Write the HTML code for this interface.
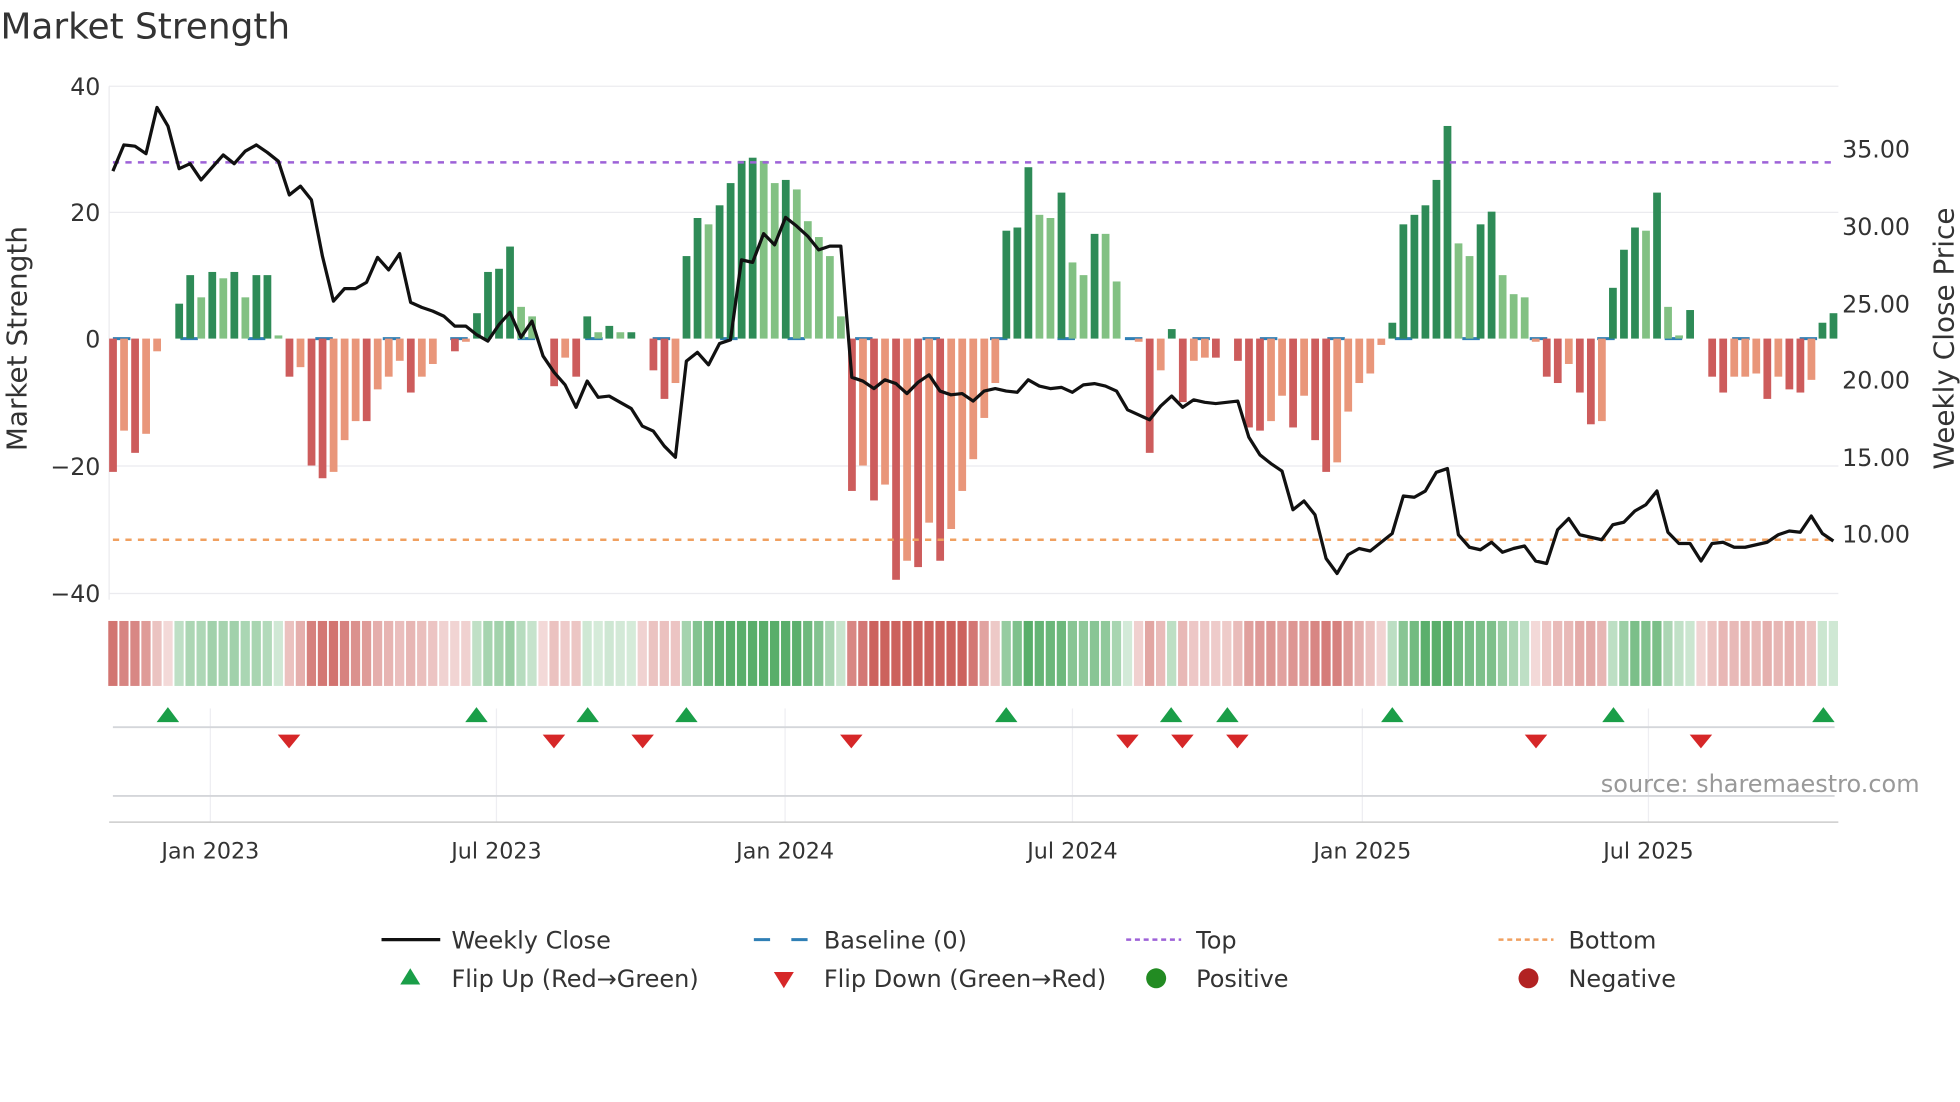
<!DOCTYPE html>
<html><head><meta charset="utf-8">
<style>
html,body{margin:0;padding:0;background:#fff;}
svg{display:block;}
text{font-family:"DejaVu Sans","Liberation Sans",sans-serif;fill:#333;}
</style></head>
<body>
<svg id="c" width="1960" height="1102" viewBox="0 0 1568 882" xmlns="http://www.w3.org/2000/svg">
<rect width="1568" height="882" fill="#fff"/>
<text x="0" y="31" font-size="28.7" fill="#333">Market Strength</text>
<g stroke="#ebebef" stroke-width="1">
<line x1="87" y1="69" x2="1471" y2="69"/>
<line x1="87" y1="170" x2="1471" y2="170"/>
<line x1="87" y1="373" x2="1471" y2="373"/>
<line x1="87" y1="475" x2="1471" y2="475"/>
<line x1="87" y1="69" x2="87" y2="480"/>
</g>
<g font-size="19" text-anchor="end">
<text x="80" y="76">40</text>
<text x="80" y="177">20</text>
<text x="80" y="278">0</text>
<text x="80" y="380">−20</text>
<text x="80" y="482">−40</text>
</g>
<g font-size="19">
<text x="1474" y="126">35.00</text>
<text x="1474" y="188">30.00</text>
<text x="1474" y="250">25.00</text>
<text x="1474" y="311">20.00</text>
<text x="1474" y="373">15.00</text>
<text x="1474" y="434">10.00</text>
</g>
<text transform="translate(21,271) rotate(-90)" font-size="22.3" text-anchor="middle">Market Strength</text>
<text transform="translate(1563,271) rotate(-90)" font-size="22.3" text-anchor="middle">Weekly Close Price</text>
<g id="base"></g>
<g id="bars"></g>
<line x1="90" y1="130" x2="1470" y2="130" stroke="#9d62d8" stroke-width="2" stroke-dasharray="5,5"/>
<line x1="90" y1="432" x2="1470" y2="432" stroke="#f0a060" stroke-width="2" stroke-dasharray="5,5"/>
<polyline id="price" fill="none" stroke="#111" stroke-width="2.6" stroke-linejoin="round"/>
<g id="strip"></g>
<g stroke="#eeeef2" stroke-width="1">
<line x1="168" y1="567" x2="168" y2="658"/><line x1="397" y1="567" x2="397" y2="658"/>
<line x1="628" y1="567" x2="628" y2="658"/><line x1="858" y1="567" x2="858" y2="658"/>
<line x1="1090" y1="567" x2="1090" y2="658"/><line x1="1319" y1="567" x2="1319" y2="658"/>
</g>
<line x1="90" y1="582" x2="1468" y2="582" stroke="#d4d6da" stroke-width="1.5"/>
<line x1="90" y1="637" x2="1468" y2="637" stroke="#d4d6da" stroke-width="1.5"/>
<line x1="87" y1="658" x2="1471" y2="658" stroke="#ccc" stroke-width="1.2"/>
<g id="tri"></g>
<text x="1536" y="634" font-size="19.2" text-anchor="end" style="fill:#999">source: sharemaestro.com</text>
<g font-size="17.8" text-anchor="middle">
<text x="168" y="687">Jan 2023</text><text x="397" y="687">Jul 2023</text>
<text x="628" y="687">Jan 2024</text><text x="858" y="687">Jul 2024</text>
<text x="1090" y="687">Jan 2025</text><text x="1319" y="687">Jul 2025</text>
</g>
<g font-size="19.2">
<line x1="305" y1="752" x2="352" y2="752" stroke="#111" stroke-width="2.6"/>
<text x="361" y="759">Weekly Close</text>
<line x1="603" y1="752" x2="647" y2="752" stroke="#2f7fb5" stroke-width="2.4" stroke-dasharray="13,17"/>
<text x="659" y="759">Baseline (0)</text>
<line x1="901" y1="752" x2="945" y2="752" stroke="#9d62d8" stroke-width="2" stroke-dasharray="4,3"/>
<text x="957" y="759">Top</text>
<line x1="1199" y1="752" x2="1243" y2="752" stroke="#f0a060" stroke-width="2" stroke-dasharray="4,3"/>
<text x="1255" y="759">Bottom</text>
<polygon points="320,788 336,788 328,775" fill="#1a9e48"/>
<text x="361" y="790">Flip Up (Red→Green)</text>
<polygon points="619,778 635,778 627,791" fill="#d62728"/>
<text x="659" y="790">Flip Down (Green→Red)</text>
<circle cx="925" cy="783" r="8" fill="#228b22"/>
<text x="957" y="790">Positive</text>
<circle cx="1223" cy="783" r="8" fill="#b22222"/>
<text x="1255" y="790">Negative</text>
</g>
</svg>
<script>
var NS="http://www.w3.org/2000/svg";
function el(p,t,a){var e=document.createElementNS(NS,t);for(var k in a)e.setAttribute(k,a[k]);p.appendChild(e);return e;}
var V=[[-21,1],[-14.5,0],[-18,1],[-15,0],[-2,0],[0,0],[5.5,1],[10,1],[6.5,0],[10.5,1],[9.5,0],[10.5,1],[6.5,0],[10,1],[10,1],[0.5,0],[-6,1],[-4.5,0],[-20,1],[-22,1],[-21,0],[-16,0],[-13,0],[-13,1],[-8,0],[-6,0],[-3.5,0],[-8.5,1],[-6,0],[-4,0],[0,0],[-2,1],[-0.5,0],[4,1],[10.5,1],[11,1],[14.5,1],[5,0],[3.5,0],[0,0],[-7.5,1],[-3,0],[-6,1],[3.5,1],[1,0],[2,1],[1,0],[1,1],[0,0],[-5,1],[-9.5,1],[-7,0],[13,1],[19,1],[18,0],[21,1],[24.5,1],[28,1],[28.5,1],[28,0],[24.5,0],[25,1],[23.5,0],[18.5,0],[16,0],[13,0],[3.5,0],[-24,1],[-20,0],[-25.5,1],[-23,0],[-38,1],[-35,0],[-36,1],[-29,0],[-35,1],[-30,0],[-24,0],[-19,0],[-12.5,0],[-7,0],[17,1],[17.5,1],[27,1],[19.5,0],[19,0],[23,1],[12,0],[10,0],[16.5,1],[16.5,0],[9,0],[0,0],[-0.5,0],[-18,1],[-5,0],[1.5,1],[-10,1],[-3.5,0],[-3,0],[-3,1],[0,0],[-3.5,1],[-14,1],[-14.5,1],[-13,0],[-9,0],[-14,1],[-9,0],[-16,1],[-21,1],[-19.5,0],[-11.5,0],[-7,0],[-5.5,0],[-1,0],[2.5,1],[18,1],[19.5,1],[21,1],[25,1],[33.5,1],[15,0],[13,0],[18,1],[20,1],[10,0],[7,0],[6.5,0],[-0.5,0],[-6,1],[-7,1],[-4,0],[-8.5,1],[-13.5,1],[-13,0],[8,1],[14,1],[17.5,1],[17,0],[23,1],[5,0],[0.5,0],[4.5,1],[0,0],[-6,1],[-8.5,1],[-6,0],[-6,0],[-5.5,0],[-9.5,1],[-6,0],[-8,1],[-8.5,1],[-6.5,0],[2.5,1],[4,1]];
var P=[137,116,117,123,86,101,135,131,144,134,124,131,121,116,122,129,156,149,160,205,241,231,231,226,206,216,203,242,246,249,253,261,261,268,273,260,250,270,257,285,298,308,326,305,318,317,322,327,341,345,357,366,289,282,292,275,272,208,210,187,196,174,181,189,200,197,197,302,305,311,304,307,315,306,300,313,316,315,321,313,311,313,314,304,309,311,310,314,308,307,309,313,328,332,336,325,317,326,320,322,323,322,321,350,364,371,377,408,401,412,447,459,444,439,441,434,427,397,398,393,378,375,428,438,440,434,442,439,437,449,451,424,415,428,430,432,420,418,409,404,393,426,435,435,449,435,434,438,438,436,434,428,425,426,413,427,433];
var n=V.length,x0=90,dx=(1467-90)/(n-1),y0=271,s=5.08;
var base=document.getElementById('base'),bars=document.getElementById('bars'),strip=document.getElementById('strip');
for(var xb=90;xb<1470;xb+=54){el(base,'line',{x1:xb,y1:y0,x2:Math.min(xb+14,1470),y2:y0,stroke:'#2f7fb5','stroke-width':2.4});}
for(var i=0;i<n;i++){
 var v=V[i][0],d=V[i][1],x=x0+i*dx;
 if(v!==0){
  var col=v>0?(d?'#2e8b57':'#82c183'):(d?'#cd5c5c':'#e9967a');
  var h=Math.abs(v)*s;
  el(bars,'rect',{x:x-3,y:v>0?y0-h:y0,width:6.2,height:h,fill:col});
 }
 var sm=0,c=0;for(var j=Math.max(0,i-2);j<=Math.min(n-1,i+2);j++){sm+=V[j][0];c++;}
 sm/=c; var vv=(Math.abs(v)*0.4+Math.abs(sm)*0.6);
 var a=Math.min(0.85,0.2+vv/35);
 var sc=(v>0||(v===0&&sm>=0))?'rgba(60,160,80,'+a+')':'rgba(195,70,65,'+a+')';
 el(strip,'rect',{x:x-3.7,y:497,width:7.4,height:52,fill:sc});
}
var pts=[];for(var i=0;i<P.length;i++){pts.push((x0+i*(1467-90)/(P.length-1)).toFixed(1)+','+P[i]);}
document.getElementById('price').setAttribute('points',pts.join(' '));
var tri=document.getElementById('tri');
[134,381,470,549,805,937,982,1114,1291,1459].forEach(function(x){el(tri,'polygon',{points:(x-9)+',578 '+(x+9)+',578 '+x+',566',fill:'#1a9e48'});});
[231,443,514,681,902,946,990,1229,1361].forEach(function(x){el(tri,'polygon',{points:(x-9)+',588 '+(x+9)+',588 '+x+',599',fill:'#d62728'});});
</script>
</body></html>
